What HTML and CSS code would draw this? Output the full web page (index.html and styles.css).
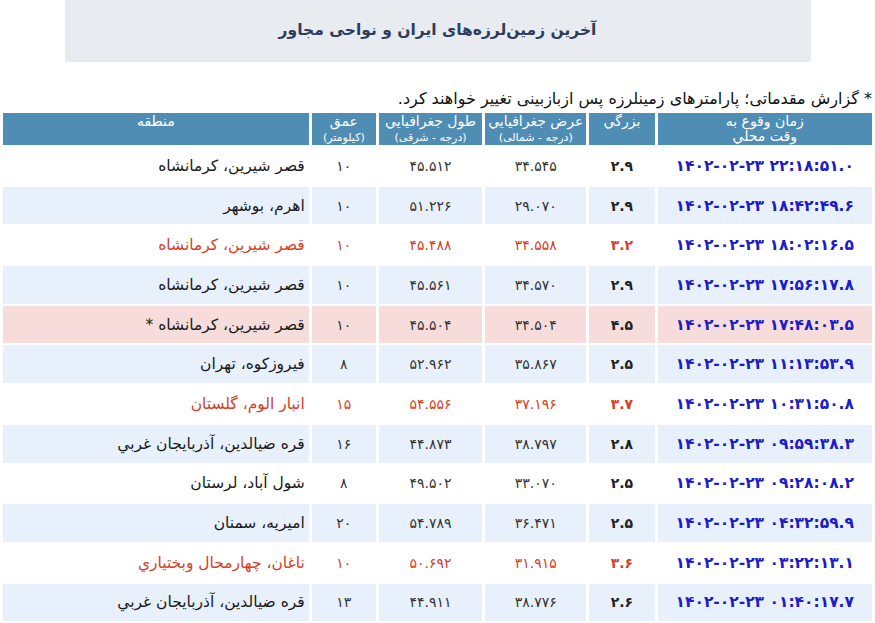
FILE: index.html
```html
<!DOCTYPE html>
<html lang="fa" dir="rtl">
<head>
<meta charset="utf-8">
<title>آخرین زمین‌لرزه‌های ایران و نواحی مجاور</title>
<link rel="stylesheet" href="styles.css">
</head>
<body>
<div class="title-box"><h1 class="title">آخرین زمین‌لرزه‌های ایران و نواحی مجاور</h1></div>
<p class="note">* گزارش مقدماتی؛ پارامترهای زمینلرزه پس ازبازبینی تغییر خواهند کرد.</p>
<table class="quakes">
<colgroup>
<col class="c-time"><col class="c-mag"><col class="c-lat"><col class="c-lon"><col class="c-depth"><col class="c-region">
</colgroup>
<thead>
<tr>
<th>زمان وقوع به<br>وقت محلي</th>
<th>بزرگي</th>
<th>عرض جغرافيايي<br><span class="sub">(درجه - شمالی)</span></th>
<th>طول جغرافيايي<br><span class="sub">(درجه - شرقی)</span></th>
<th>عمق<br><span class="sub">(کیلومتر)</span></th>
<th>منطقه</th>
</tr>
</thead>
<tbody>
<tr class="odd"><td class="time"><span dir="ltr">۱۴۰۲-۰۲-۲۳ ۲۲:۱۸:۵۱.۰</span></td><td class="mag">۲.۹</td><td>۳۴.۵۴۵</td><td>۴۵.۵۱۲</td><td>۱۰</td><td class="region">قصر شیرین، کرمانشاه</td></tr>
<tr class="even"><td class="time"><span dir="ltr">۱۴۰۲-۰۲-۲۳ ۱۸:۴۲:۴۹.۶</span></td><td class="mag">۲.۹</td><td>۲۹.۰۷۰</td><td>۵۱.۲۲۶</td><td>۱۰</td><td class="region">اهرم، بوشهر</td></tr>
<tr class="odd red"><td class="time"><span dir="ltr">۱۴۰۲-۰۲-۲۳ ۱۸:۰۲:۱۶.۵</span></td><td class="mag">۳.۲</td><td>۳۴.۵۵۸</td><td>۴۵.۴۸۸</td><td>۱۰</td><td class="region">قصر شیرین، کرمانشاه</td></tr>
<tr class="even"><td class="time"><span dir="ltr">۱۴۰۲-۰۲-۲۳ ۱۷:۵۶:۱۷.۸</span></td><td class="mag">۲.۹</td><td>۳۴.۵۷۰</td><td>۴۵.۵۶۱</td><td>۱۰</td><td class="region">قصر شیرین، کرمانشاه</td></tr>
<tr class="pink"><td class="time"><span dir="ltr">۱۴۰۲-۰۲-۲۳ ۱۷:۴۸:۰۳.۵</span></td><td class="mag">۴.۵</td><td>۳۴.۵۰۴</td><td>۴۵.۵۰۴</td><td>۱۰</td><td class="region">قصر شیرین، کرمانشاه *</td></tr>
<tr class="even"><td class="time"><span dir="ltr">۱۴۰۲-۰۲-۲۳ ۱۱:۱۳:۵۳.۹</span></td><td class="mag">۲.۵</td><td>۳۵.۸۶۷</td><td>۵۲.۹۶۲</td><td>۸</td><td class="region">فیروزکوه، تهران</td></tr>
<tr class="odd red"><td class="time"><span dir="ltr">۱۴۰۲-۰۲-۲۳ ۱۰:۳۱:۵۰.۸</span></td><td class="mag">۳.۷</td><td>۳۷.۱۹۶</td><td>۵۴.۵۵۶</td><td>۱۵</td><td class="region">انبار الوم، گلستان</td></tr>
<tr class="even"><td class="time"><span dir="ltr">۱۴۰۲-۰۲-۲۳ ۰۹:۵۹:۳۸.۳</span></td><td class="mag">۲.۸</td><td>۳۸.۷۹۷</td><td>۴۴.۸۷۳</td><td>۱۶</td><td class="region">قره ضیالدین، آذربایجان غربي</td></tr>
<tr class="odd"><td class="time"><span dir="ltr">۱۴۰۲-۰۲-۲۳ ۰۹:۲۸:۰۸.۲</span></td><td class="mag">۲.۵</td><td>۳۳.۰۷۰</td><td>۴۹.۵۰۲</td><td>۸</td><td class="region">شول آباد، لرستان</td></tr>
<tr class="even"><td class="time"><span dir="ltr">۱۴۰۲-۰۲-۲۳ ۰۴:۳۲:۵۹.۹</span></td><td class="mag">۲.۵</td><td>۳۶.۴۷۱</td><td>۵۴.۷۸۹</td><td>۲۰</td><td class="region">امیریه، سمنان</td></tr>
<tr class="odd red"><td class="time"><span dir="ltr">۱۴۰۲-۰۲-۲۳ ۰۳:۲۲:۱۳.۱</span></td><td class="mag">۳.۶</td><td>۳۱.۹۱۵</td><td>۵۰.۶۹۲</td><td>۱۰</td><td class="region">ناغان، چهارمحال وبختیاري</td></tr>
<tr class="even"><td class="time"><span dir="ltr">۱۴۰۲-۰۲-۲۳ ۰۱:۴۰:۱۷.۷</span></td><td class="mag">۲.۶</td><td>۳۸.۷۷۶</td><td>۴۴.۹۱۱</td><td>۱۳</td><td class="region">قره ضیالدین، آذربایجان غربي</td></tr>
</tbody>
</table>
</body>
</html>
```
FILE: styles.css
```css
html, body {
  margin: 0;
  padding: 0;
  background: #ffffff;
}
body {
  font-family: "DejaVu Sans", "Noto Sans", sans-serif;
  color: #222222;
  width: 875px;
  overflow: hidden;
}
.title-box {
  width: 746px;
  height: 62px;
  margin: 0 auto;
  background: #e8ebf0;
  display: flex;
  align-items: center;
  justify-content: center;
}
.title {
  margin: 0;
  font-size: 15.5px;
  font-weight: bold;
  color: #2e3d5c;
  padding-bottom: 2px;
}
.note {
  margin: 26px 3px 0 0;
  height: 23px;
  line-height: 22px;
  font-size: 16px;
  color: #111111;
}
.quakes {
  width: 875px;
  border-collapse: separate;
  border-spacing: 3px 2px;
  table-layout: fixed;
  margin-top: 0;
}
.c-time { width: 214px; }
.c-mag { width: 65px; }
.c-lat { width: 101px; }
.c-lon { width: 103px; }
.c-depth { width: 64px; }
.c-region { width: 305px; }
.quakes th {
  background: #508db5;
  color: #ffffff;
  font-weight: normal;
  font-size: 14px;
  line-height: 15px;
  height: 32px;
  padding: 1px 2px 0;
  vertical-align: top;
  text-align: center;
  box-sizing: border-box;
}
.quakes th .sub {
  font-size: 11px;
}
.quakes td {
  height: 37.7px;
  padding: 0 4px;
  box-sizing: border-box;
  text-align: center;
  vertical-align: middle;
  font-size: 14px;
  color: #333333;
}
.quakes td.region {
  text-align: right;
  font-size: 15.5px;
  color: #1a1a1a;
}
.quakes td.mag {
  font-weight: bold;
  color: #222222;
}
.quakes td.time {
  color: #1c1cc8;
  font-weight: bold;
  font-size: 15.5px;
  padding: 0 2px;
}
.odd td { background: #ffffff; }
.even td { background: #e7f0fb; }
.pink td { background: #f7dcdc; }
.red td, .red td.region, .red td.mag {
  color: #d6401f;
}
.red td.time { color: #1c1cc8; }
```
